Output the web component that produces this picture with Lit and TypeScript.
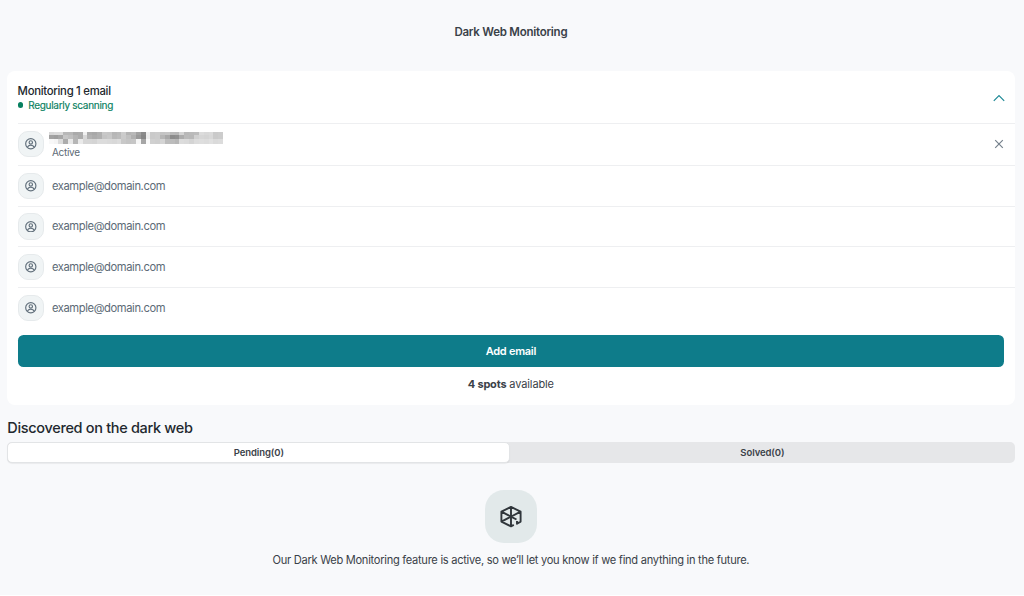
import { LitElement, html, css, svg } from "lit";
import { customElement } from "lit/decorators.js";

const MOSAIC: string[][] = [
  "d8 dc dc b8 b8 aa ac f0 ac a8 b0 c8 c6 b6 ba cc b4 b8 a2 8a ee ca cc c4 c6 ba b8 d4 b8 ba bc dc d8 da ca cc".split(" "),
  "a2 9e a6 c6 c0 b4 ac d8 b2 ac b0 c4 c8 b8 bc ca c0 b0 9a 86 ec ca cc b6 a8 8c 90 ac ba b8 d0 d6 d4 d8 ca cc".split(" "),
  "f8 f4 dc ac e8 b6 ea d6 d6 d4 dc dc da d8 dc c8 c4 c6 f6 a6 fa d0 ce d4 bc bc b6 dc da d4 dc de dc e0 da dc".split(" "),
];

const userIcon = svg`<svg class="user" viewBox="0 0 24 24" fill="none" stroke="currentColor" stroke-width="2.4">
  <circle cx="12" cy="12" r="10.6"/><circle cx="12" cy="9.2" r="3.5"/>
  <path d="M5 19.2c1.2-3 3.6-4.2 7-4.2s5.800 1.2 7 4.2"/></svg>`;

@customElement("app-root")
export class AppRoot extends LitElement {
  static styles = css`
    :host { display: block; height: 596px; overflow: hidden; box-sizing: border-box; background: #f8f9fb;
      border-bottom: 1px solid #fff; font-family: Inter, "Liberation Sans", sans-serif; color: #3a4148; }
    * { box-sizing: border-box; }
    .page { padding: 0 9.5px 0 7.3px; }
    .title { height: 71px; padding: 23px 0 0; text-align: center; font-size: 11.5px; line-height: 18px; font-weight: 600; letter-spacing: -0.25px; }
    .card { height: 334.3px; background: #fff; border-radius: 8px; padding: 0 0 0 10.3px; overflow: hidden; }
    .head { height: 51.6px; padding: 12.5px 10px 0 0; display: flex; justify-content: space-between; }
    .head-title { font-size: 11.3px; line-height: 15px; font-weight: 500; color: #22282e; letter-spacing: -0.27px; }
    .status { display: flex; align-items: center; gap: 5px; font-size: 10px; line-height: 13px; color: #078060; letter-spacing: -0.29px; }
    .status span { -webkit-text-stroke: 0.15px currentColor; }
    .dot { width: 5.6px; height: 5.6px; border-radius: 50%; background: #078060; }
    .chev { width: 12px; height: 8px; margin-top: 10px; color: #1e8996; }
    .row { height: 40.7px; display: flex; align-items: center; gap: 8px; border-top: 1px solid #eeeff1; padding-right: 10px; }
    .row.first { height: 42.3px; }
    .avatar { width: 26.3px; height: 26.3px; border-radius: 10px; background: #f0f4f5; border: 1px solid #e6eaec;
      display: grid; place-items: center; color: #62707c; flex: none; }
    .user { width: 11.6px; height: 11.6px; }
    .mail { font-size: 11.2px; line-height: 16px; color: #5c6a76; letter-spacing: -0.4px; }
    .info { flex: 1; height: 41px; padding-top: 8px; }
    .mosaic { display: grid; grid-template-rows: 3px 4.7px 4.7px; width: 174.4px; margin-left: -3.2px; }
    .strip { display: flex; }
    .cell { flex: 1; }
    .active { font-size: 10px; line-height: 13px; color: #5c6a76; margin-top: 1.4px; letter-spacing: -0.28px; }
    .close { width: 10px; height: 10px; color: #75818c; margin-right: 0.5px; }
    .button { height: 31.4px; margin: 7.6px 10.4px 0 0; border-radius: 5.5px; background: #0e7c8a; color: #fff;
      font-size: 11px; font-weight: 600; display: grid; place-items: center; letter-spacing: -0.27px; }
    .spots { padding-right: 10.4px; margin-top: 9px; text-align: center; font-size: 11px; line-height: 16px; letter-spacing: -0.12px; }
    .spots b { font-weight: 700; letter-spacing: -0.2px; }
    .h2 { margin-top: 13px; font-size: 14.5px; line-height: 20px; height: 24px; font-weight: 500; color: #22282e; letter-spacing: -0.32px; }
    .tabs { height: 21px; display: grid; grid-template-columns: 503px 1fr; background: #e6e7e9; border-radius: 5px; }
    .tab { display: grid; place-items: center; font-size: 9.5px; font-weight: 600; line-height: 12px; letter-spacing: -0.08px; }
    .on { background: #fff; border: 1px solid #e2e4e6; border-radius: 5px; box-shadow: 0 1px 1px #0000000f; }
    .badge { width: 52.4px; height: 52.4px; margin: 27.2px auto 0; border-radius: 19px; background: #e2e9ea;
      display: grid; place-items: center; color: #30363b; }
    .web { width: 23px; height: 23px; }
    .note { margin-top: 9.2px; text-align: center; font-size: 11.1px; line-height: 17px; white-space: nowrap; letter-spacing: -0.28px; }
  `;

  render() {
    return html`<div class="page">
      <div class="title"><span>Dark Web Monitoring</span></div>
      <section class="card">
        <div class="head">
          <div>
            <div class="head-title"><span>Monitoring 1 email</span></div>
            <div class="status"><i class="dot"></i><span>Regularly scanning</span></div>
          </div>
          <svg class="chev" viewBox="0 0 12 8" fill="none" stroke="currentColor" stroke-width="1.2"><path d="M.8 6.8 6 1.5l5.2 5.3"/></svg>
        </div>
        <div class="row first">
          <div class="avatar">${userIcon}</div>
          <div class="info">
            <div class="mosaic">${MOSAIC.map((r) => html`<div class="strip">${r.map((c) => html`<i class="cell" style="background:#${c}${c}${c}"></i>`)}</div>`)}</div>
            <div class="active"><span>Active</span></div>
          </div>
          <svg class="close" viewBox="0 0 10 10" fill="none" stroke="currentColor" stroke-width="1.2"><path d="m1.2 1.2 7.6 7.6m0-7.6L1.2 8.8"/></svg>
        </div>
        ${[0, 1, 2, 3].map(() => html`<div class="row"><div class="avatar">${userIcon}</div><span class="mail">example@domain.com</span></div>`)}
        <div class="button"><span>Add email</span></div>
        <div class="spots"><b>4 spots</b> available</div>
      </section>
      <div class="h2"><span>Discovered on the dark web</span></div>
      <div class="tabs"><div class="tab on"><span>Pending(0)</span></div><div class="tab"><span>Solved(0)</span></div></div>
      <div class="badge">
        <svg class="web" viewBox="0 0 23 23" fill="none" stroke="currentColor" stroke-width="1.9" stroke-linejoin="round">
          <path d="M14.8 19.900 12 21.4 2.4 16.600V6.700L12 1.900l9.600 4.800v9.900L18 18.700V16M12 1.900v19.500M2.400 6.700 17.500 14.500M2.400 16.600l19.200-9.900"/>
        </svg>
      </div>
      <div class="note"><span>Our Dark Web Monitoring feature is active, so we’ll let you know if we find anything in the future.</span></div>
    </div>`;
  }
}
